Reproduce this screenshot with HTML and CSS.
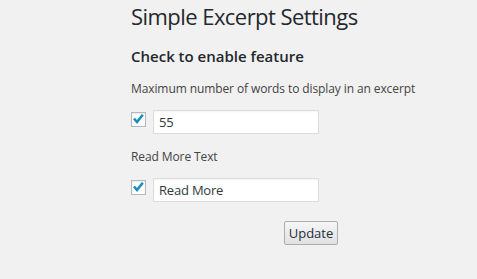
FILE: index.html
```html
<!DOCTYPE html>
<html lang="en">
<head>
  <meta charset="UTF-8">
  <title>Simple Excerpt Settings</title>
  <link rel="stylesheet" href="styles.css">
</head>
<body>
  <div class="wrap">
    <h1>Simple Excerpt Settings</h1>
    <form class="settings">
      <h2>Check to enable feature</h2>

      <!-- Excerpt length -->
      <p class="field-label">Maximum number of words to display in an excerpt</p>
      <div class="field-row">
        <span class="check">
          <input type="checkbox" name="enable_length" checked>
          <svg viewBox="0 0 15 15" width="15" height="15"><polyline points="3,6.5 6,10 11.8,2.8" fill="none" stroke="#1e8cbe" stroke-width="2.6"/></svg>
        </span>
        <input class="text" type="text" name="excerpt_length" value="55">
      </div>

      <!-- Read more text -->
      <p class="field-label">Read More Text</p>
      <div class="field-row">
        <span class="check">
          <input type="checkbox" name="enable_more" checked>
          <svg viewBox="0 0 15 15" width="15" height="15"><polyline points="3,6.5 6,10 11.8,2.8" fill="none" stroke="#1e8cbe" stroke-width="2.6"/></svg>
        </span>
        <input class="text" type="text" name="read_more" value="Read More">
      </div>

      <button type="submit">Update</button>
    </form>
  </div>
</body>
</html>
```

FILE: styles.css
```css
body {
  margin: 0;
  background: #f1f1f1;
  color: #444;
  font-family: "Open Sans", sans-serif;
  font-size: 12px;
}
.wrap {
  padding: 2px 0 0 131px;
}
h1 {
  margin: 0;
  font-size: 22px;
  font-weight: 400;
  letter-spacing: -0.55px;
  line-height: 29px;
  color: #23282d;
}
h2 {
  margin: 15px 0 0;
  font-size: 15px;
  font-weight: 600;
  line-height: 20px;
  color: #23282d;
}
.field-label {
  margin: 14px 0 0;
  line-height: 18px;
  letter-spacing: -0.1px;
}
.field-row {
  display: flex;
  align-items: flex-start;
  margin-top: 12px;
}
.field-row + .field-label {
  margin-top: 14px;
}
.check {
  position: relative;
  width: 15px;
  height: 15px;
  margin: 2px 7px 0 0;
}
.check input {
  appearance: none;
  -webkit-appearance: none;
  display: block;
  margin: 0;
  width: 15px;
  height: 15px;
  border: 1px solid #b4b9be;
  background: #fff;
  box-shadow: inset 0 1px 2px rgba(0,0,0,0.1);
  box-sizing: border-box;
}
.check svg {
  position: absolute;
  left: 0;
  top: 0;
  pointer-events: none;
}
.text {
  width: 166px;
  height: 24px;
  padding: 0 5px;
  border: 1px solid #ddd;
  background: #fff;
  color: #32373c;
  font-family: "Open Sans", sans-serif;
  font-size: 13px;
  letter-spacing: -0.2px;
  box-sizing: border-box;
  box-shadow: inset 0 1px 2px rgba(0,0,0,0.05);
}
button {
  display: block;
  margin: 19px 0 0 153px;
  width: 54px;
  height: 24px;
  padding: 0;
  border: 1px solid #adadad;
  border-radius: 2px;
  background: linear-gradient(#f6f6f6, #e1e1e1);
  color: #1f2d3a;
  font-family: "Open Sans", sans-serif;
  font-size: 13px;
  cursor: pointer;
}
```
